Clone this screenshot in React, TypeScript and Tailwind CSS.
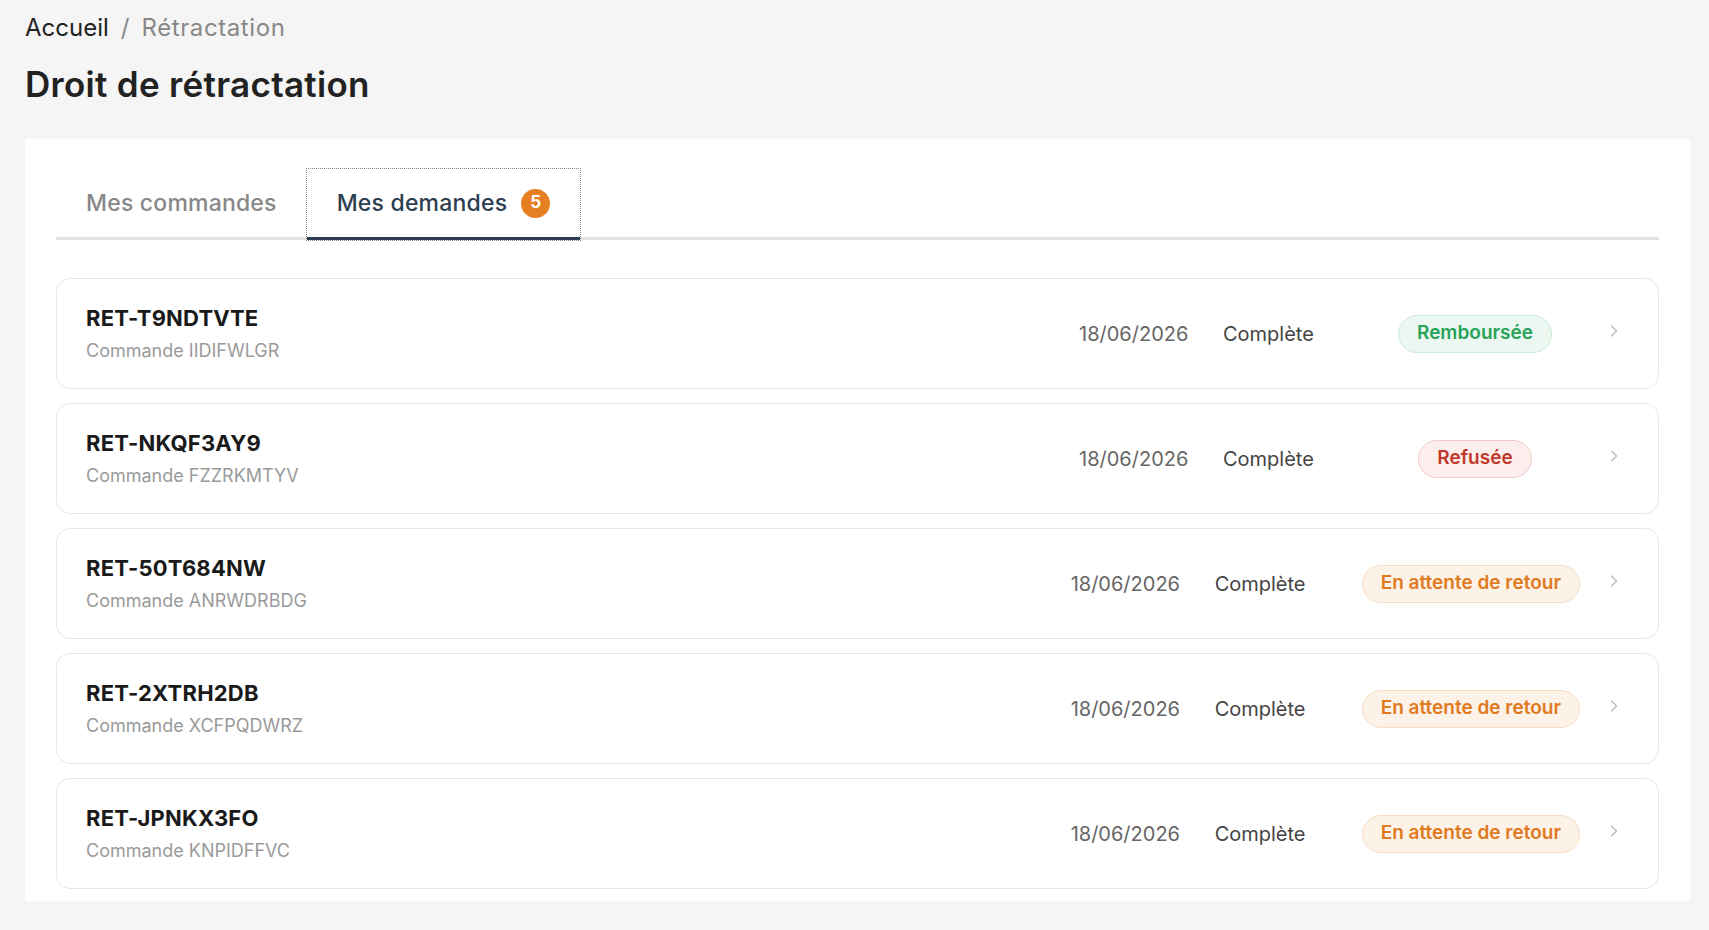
import { ChevronRight } from "lucide-react";

type Status = "refunded" | "refused" | "pending";

const requests: { id: string; order: string; date: string; state: string; status: Status }[] = [
  { id: "RET-T9NDTVTE", order: "IIDIFWLGR", date: "18/06/2026", state: "Complète", status: "refunded" },
  { id: "RET-NKQF3AY9", order: "FZZRKMTYV", date: "18/06/2026", state: "Complète", status: "refused" },
  { id: "RET-50T684NW", order: "ANRWDRBDG", date: "18/06/2026", state: "Complète", status: "pending" },
  { id: "RET-2XTRH2DB", order: "XCFPQDWRZ", date: "18/06/2026", state: "Complète", status: "pending" },
  { id: "RET-JPNKX3FO", order: "KNPIDFFVC", date: "18/06/2026", state: "Complète", status: "pending" },
];

function StatusBadge({ status }: { status: Status }) {
  if (status === "refunded") {
    return (
      <span className="h-[38px] px-[18px] flex items-center rounded-full border border-[#c8ead5] bg-[#ebf7f0] text-[#27a35a] text-[19px] font-semibold">
        Remboursée
      </span>
    );
  }
  if (status === "refused") {
    return (
      <span className="h-[38px] px-[18px] flex items-center rounded-full border border-[#f3c9c9] bg-[#fdeeee] text-[#c0392b] text-[19px] font-semibold">
        Refusée
      </span>
    );
  }
  return (
    <span className="h-[38px] px-[18px] flex items-center rounded-full border border-[#f7dcc2] bg-[#fdf2e8] text-[#e07a1f] text-[19px] font-semibold whitespace-nowrap">
      En attente de retour
    </span>
  );
}

export default function App() {
  return (
    <main className="min-h-screen bg-[#f5f5f5] pl-[25px] pr-[19px] pt-[12px] font-['Inter',sans-serif] text-[#222]">
      {/* Fil d'ariane */}
      <nav className="flex items-center gap-[12px] text-[24px] leading-8">
        <span className="text-[#222]">Accueil</span>
        <span className="text-[#888]">/</span>
        <span className="text-[#888] tracking-[0.6px]">Rétractation</span>
      </nav>

      <h1 className="mt-[20px] text-[35px] leading-10 font-semibold tracking-[0.3px] text-[#222]">
        Droit de rétractation
      </h1>

      <section className="mt-[35px] bg-white px-[31px] pt-[30px] pb-[12px]">
        {/* Onglets */}
        <div className="flex border-b-[3px] border-[#e2e2e2]">
          <button className="h-[71px] -mb-[3px] px-[30px] flex items-center border-b-[3px] border-transparent text-[23px] tracking-[0.2px] font-medium text-[#888]">
            Mes commandes
          </button>
          <button className="h-[71px] -mb-[3px] px-[30px] flex items-center gap-[14px] border-b-[3px] border-[#2c3e50] outline-1 outline-dotted outline-[#888] text-[23px] tracking-[0.2px] font-medium text-[#2c3e50]">
            Mes demandes
            <span className="w-[29px] h-[29px] rounded-full bg-[#e67e22] text-white text-[17px] font-bold flex items-center justify-center">
              5
            </span>
          </button>
        </div>

        {/* Liste des demandes */}
        <div className="mt-[38px] flex flex-col gap-[14px]">
          {requests.map((r) => (
            <div
              key={r.id}
              className="h-[111px] flex items-center justify-between rounded-[14px] border border-[#e6e6e6] bg-white pl-[29px] pr-[34px]"
            >
              <div className="flex flex-col gap-[7px]">
                <span className="text-[22px] leading-7 font-bold tracking-[0.2px] text-[#1a1a1a]">{r.id}</span>
                <span className="text-[18px] leading-6 text-[#9a9a9a]">Commande {r.order}</span>
              </div>
              <div className="flex items-center gap-[24px]">
                <span className="min-w-[120px] text-[20px] text-[#666]">{r.date}</span>
                <span className="min-w-[123px] text-[20px] text-[#444]">{r.state}</span>
                <div className="min-w-[210px] flex justify-center">
                  <StatusBadge status={r.status} />
                </div>
                <ChevronRight size={20} strokeWidth={1.5} className="text-[#bbb] -mt-[6px]" />
              </div>
            </div>
          ))}
        </div>
      </section>
    </main>
  );
}
